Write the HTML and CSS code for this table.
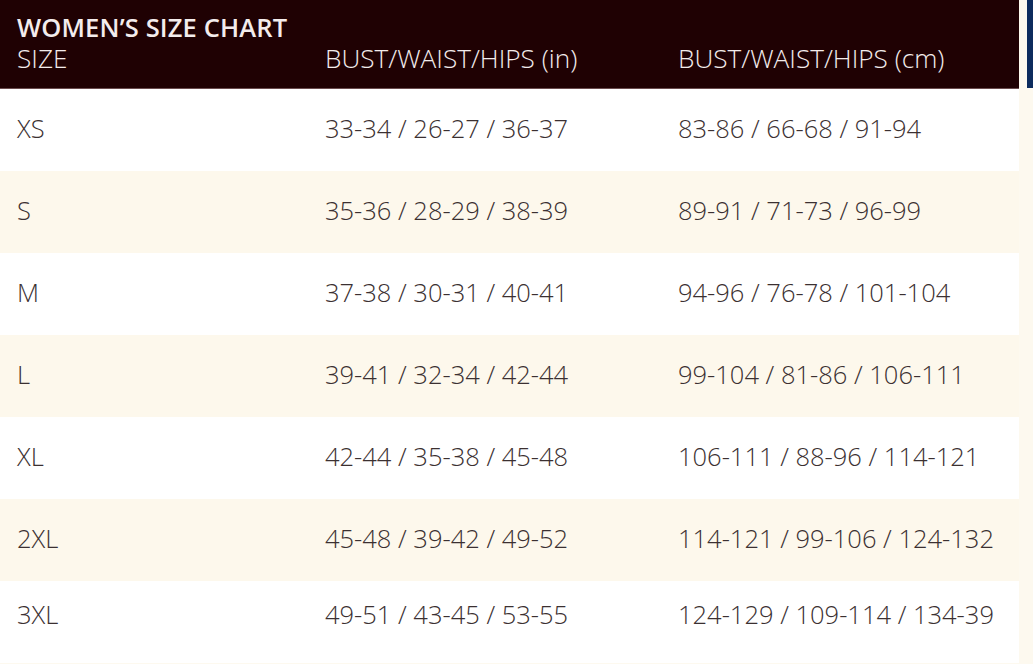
FILE: index.html
```html
<!DOCTYPE html>
<html lang="en">
<head>
<meta charset="utf-8">
<title>Women's Size Chart</title>
<link rel="stylesheet" href="styles.css">
</head>
<body>
<div class="page">
  <div class="chart">
    <div class="chart-head">
      <div class="chart-title">WOMEN’S SIZE CHART</div>
      <div class="row row-head">
        <div class="cell">SIZE</div>
        <div class="cell">BUST/WAIST/HIPS (in)</div>
        <div class="cell">BUST/WAIST/HIPS (cm)</div>
      </div>
    </div>
    <div class="row"><div class="cell">XS</div><div class="cell">33-34 / 26-27 / 36-37</div><div class="cell">83-86 / 66-68 / 91-94</div></div>
    <div class="row alt"><div class="cell">S</div><div class="cell">35-36 / 28-29 / 38-39</div><div class="cell">89-91 / 71-73 / 96-99</div></div>
    <div class="row"><div class="cell">M</div><div class="cell">37-38 / 30-31 / 40-41</div><div class="cell">94-96 / 76-78 / 101-104</div></div>
    <div class="row alt"><div class="cell">L</div><div class="cell">39-41 / 32-34 / 42-44</div><div class="cell">99-104 / 81-86 / 106-111</div></div>
    <div class="row"><div class="cell">XL</div><div class="cell">42-44 / 35-38 / 45-48</div><div class="cell">106-111 / 88-96 / 114-121</div></div>
    <div class="row alt"><div class="cell">2XL</div><div class="cell">45-48 / 39-42 / 49-52</div><div class="cell">114-121 / 99-106 / 124-132</div></div>
    <div class="row last"><div class="cell">3XL</div><div class="cell">49-51 / 43-45 / 53-55</div><div class="cell">124-129 / 109-114 / 134-39</div></div>
  </div>
  <div class="edge"></div>
</div>
</body>
</html>
```
FILE: styles.css
```css
html, body {
  margin: 0;
  padding: 0;
  background: #fdf9ef;
}
body {
  font-family: "Open Sans", "Liberation Sans", sans-serif;
  font-weight: 300;
  color: #3b3031;
  overflow: hidden;
}
.page {
  position: relative;
  width: 1033px;
  height: 664px;
  overflow: hidden;
}
.chart {
  width: 1019px;
}
.chart-head {
  background: #1f0103;
  color: #f3ecec;
  padding: 13px 0 13px;
  height: 89px;
  box-sizing: border-box;
  border-bottom: 1px solid #6a4c4e;
}
.chart-title {
  font-weight: 600;
  font-size: 25.5px;
  line-height: 29px;
  padding-left: 17px;
  letter-spacing: 0.15px;
  margin-bottom: 0;
}
.row {
  display: grid;
  grid-template-columns: 308px 353px 1fr;
  padding-left: 17px;
  height: 82px;
  align-items: center;
  font-size: 25.5px;
  background: #ffffff;
  padding-bottom: 4px;
  box-sizing: border-box;
}
.row.alt {
  background: #fdf8ec;
}
.row.last {
  padding-bottom: 16px;
}
.row-head {
  height: 33px;
  line-height: 33px;
  font-size: 26.2px;
  background: transparent;
  padding-bottom: 0;
}
.cell {
  white-space: nowrap;
}
.edge {
  position: absolute;
  top: 0;
  right: 0;
  width: 6px;
  height: 88px;
  background: #0d2c5e;
}
```
